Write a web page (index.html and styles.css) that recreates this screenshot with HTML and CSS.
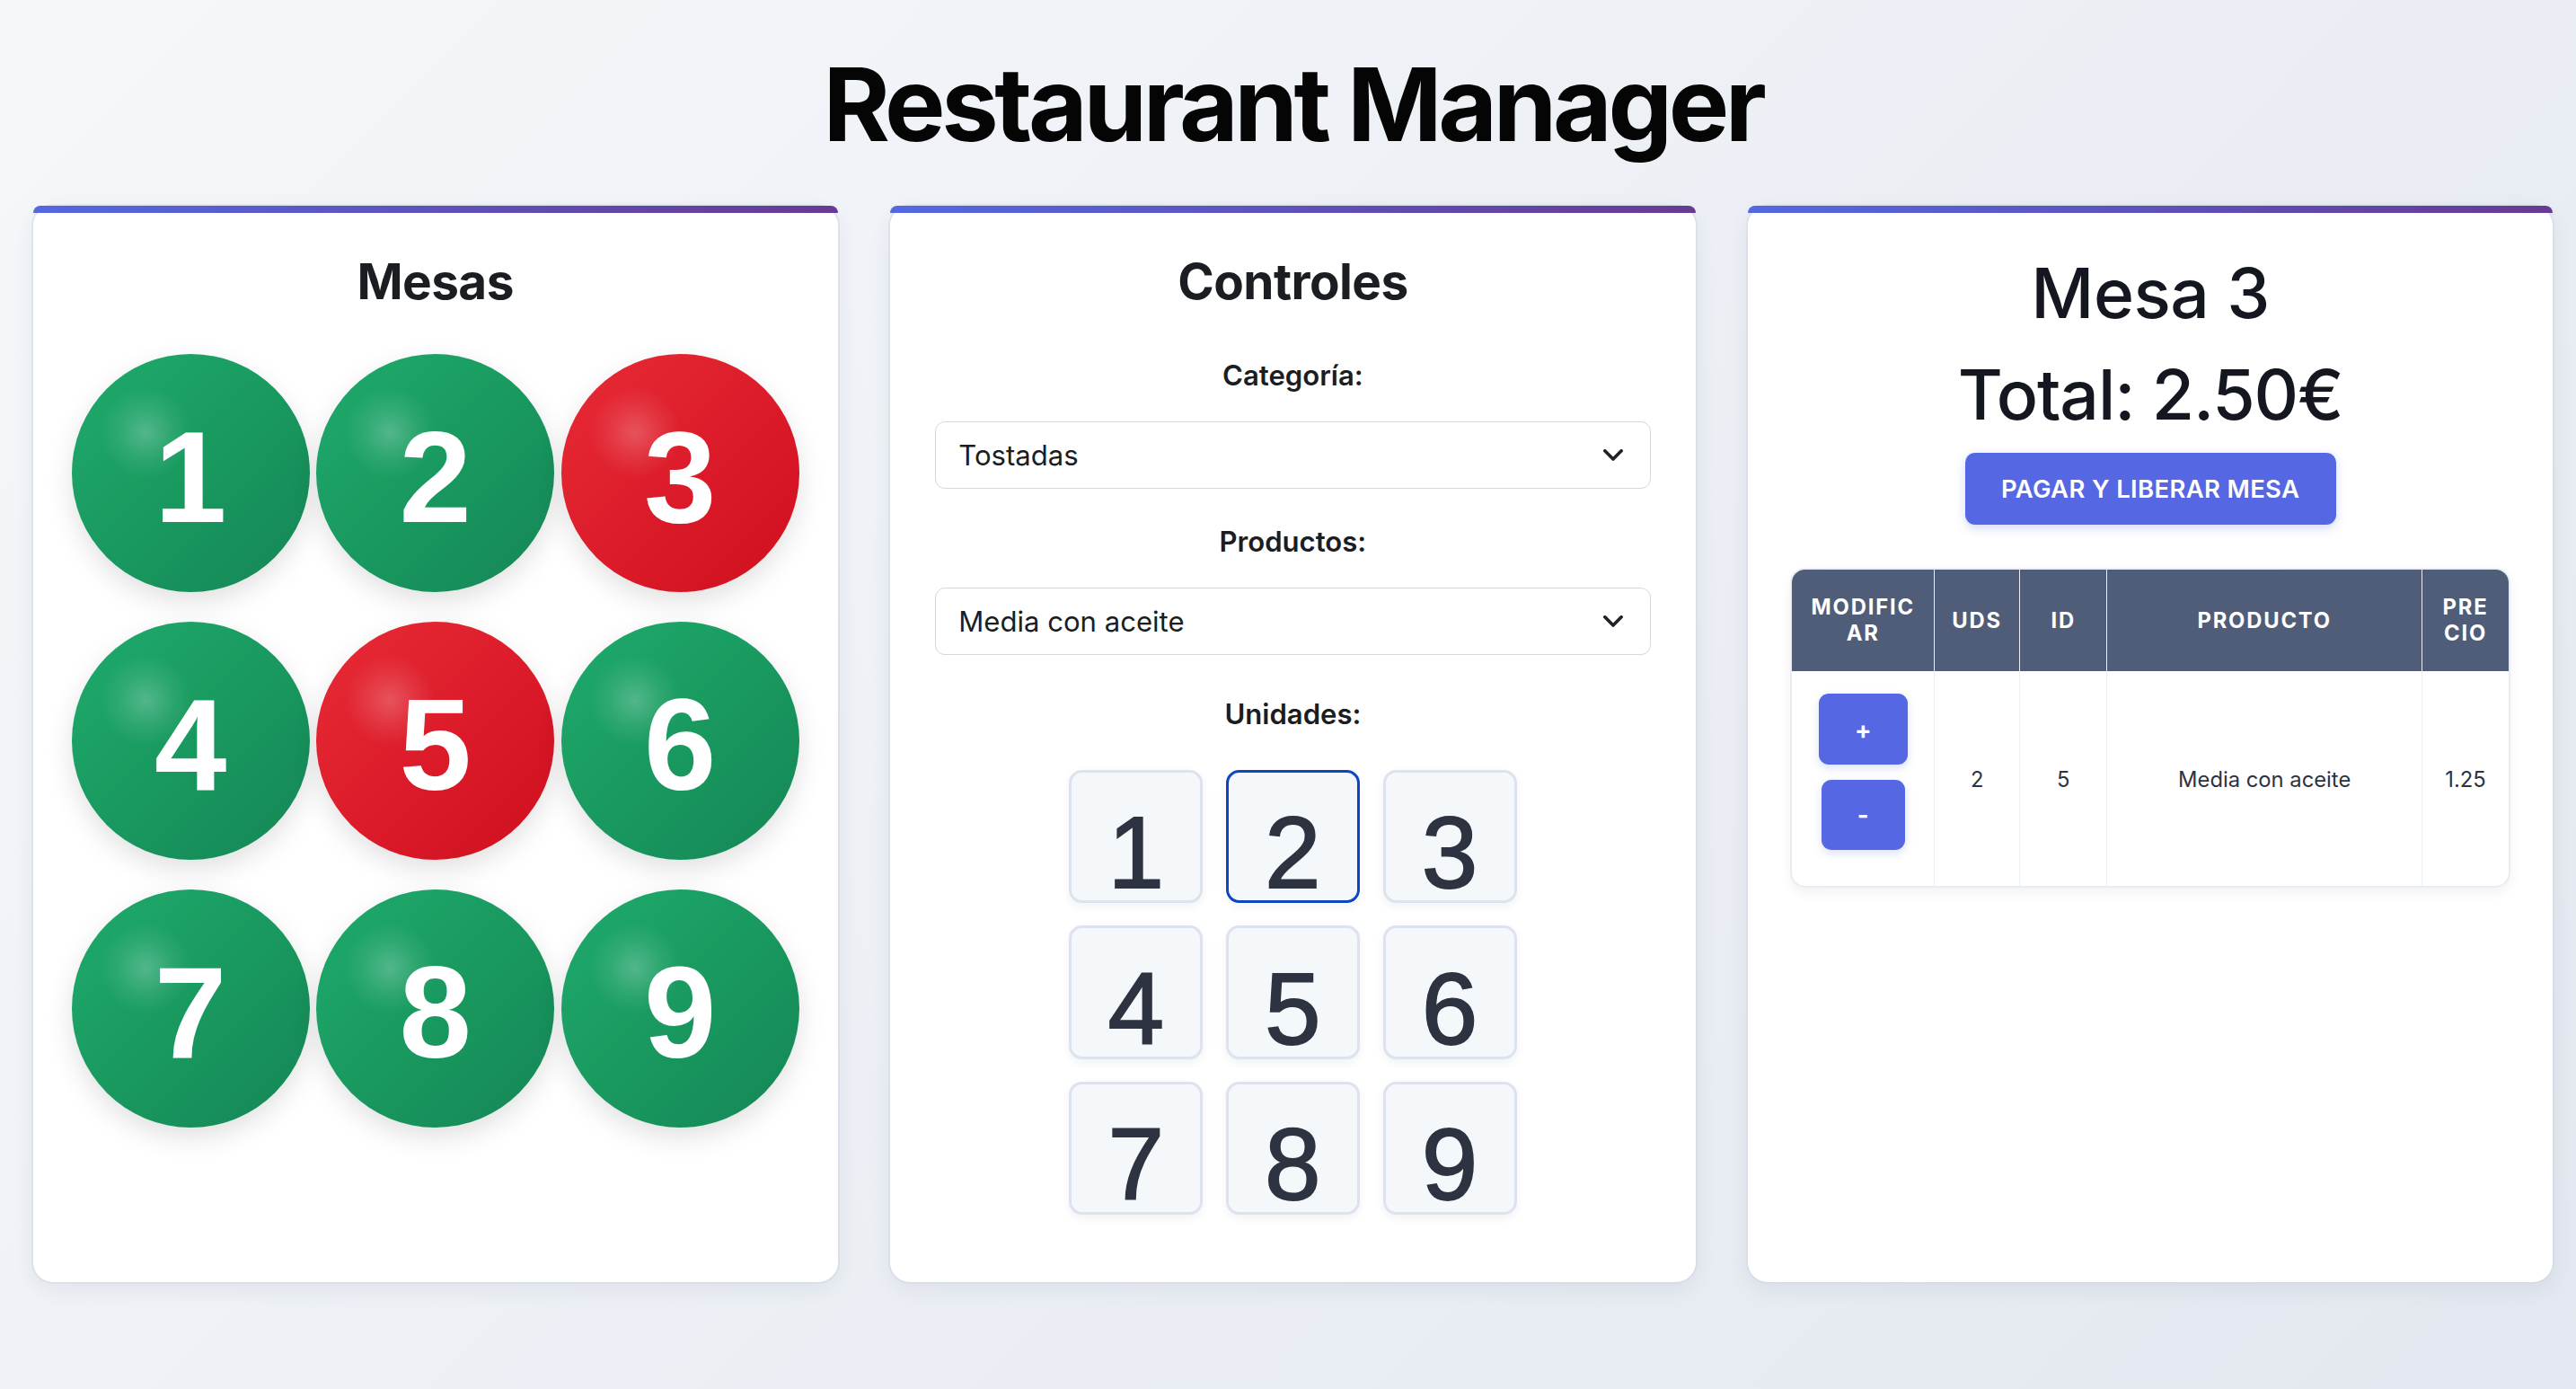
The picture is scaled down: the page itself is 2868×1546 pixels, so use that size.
FILE: index.html
```html
<!DOCTYPE html>
<html lang="es">
<head>
<meta charset="utf-8">
<title>Restaurant Manager</title>
<link rel="stylesheet" href="styles.css">
</head>
<body>
<div class="app">
  <h1 class="title">Restaurant Manager</h1>
  <main class="cards">
    <section class="card">
      <h2 class="card-title">Mesas</h2>
      <div class="tables-grid">
        <button class="table-btn">1</button>
        <button class="table-btn">2</button>
        <button class="table-btn busy">3</button>
        <button class="table-btn">4</button>
        <button class="table-btn busy">5</button>
        <button class="table-btn">6</button>
        <button class="table-btn">7</button>
        <button class="table-btn">8</button>
        <button class="table-btn">9</button>
      </div>
    </section>

    <section class="card">
      <h2 class="card-title">Controles</h2>
      <label class="field-label first">Categoría:</label>
      <div class="select-wrap">
        <select class="select"><option>Tostadas</option></select>
        <svg class="chevron" viewBox="0 0 12 7" width="12" height="7"><path d="M1 1l5 5 5-5" fill="none" stroke="#1f2328" stroke-width="2" stroke-linecap="round" stroke-linejoin="round"/></svg>
      </div>
      <label class="field-label">Productos:</label>
      <div class="select-wrap">
        <select class="select"><option>Media con aceite</option></select>
        <svg class="chevron" viewBox="0 0 12 7" width="12" height="7"><path d="M1 1l5 5 5-5" fill="none" stroke="#1f2328" stroke-width="2" stroke-linecap="round" stroke-linejoin="round"/></svg>
      </div>
      <label class="field-label units">Unidades:</label>
      <div class="keypad">
        <button class="key">1</button>
        <button class="key selected">2</button>
        <button class="key">3</button>
        <button class="key">4</button>
        <button class="key">5</button>
        <button class="key">6</button>
        <button class="key">7</button>
        <button class="key">8</button>
        <button class="key">9</button>
      </div>
    </section>

    <section class="card">
      <h2 class="order-title">Mesa 3</h2>
      <p class="order-total">Total: 2.50€</p>
      <button class="pay-btn">Pagar y liberar mesa</button>
      <div class="table-wrap">
        <table class="order-table">
          <colgroup>
            <col class="c-mod"><col class="c-uds"><col class="c-id"><col class="c-prod"><col class="c-price">
          </colgroup>
          <thead>
            <tr><th>Modificar</th><th>Uds</th><th>ID</th><th>Producto</th><th>Precio</th></tr>
          </thead>
          <tbody>
            <tr>
              <td class="mod-cell">
                <button class="mini-btn">+</button>
                <button class="mini-btn">-</button>
              </td>
              <td>2</td>
              <td>5</td>
              <td>Media con aceite</td>
              <td>1.25</td>
            </tr>
          </tbody>
        </table>
      </div>
    </section>
  </main>
</div>
</body>
</html>
```

FILE: styles.css
```css
html, body {
  margin: 0;
  padding: 0;
}

body {
  min-height: 100vh;
  background: linear-gradient(135deg, #f5f7fa 0%, #e3e8f0 100%);
  font-family: Inter, "Noto Sans", sans-serif;
  color: #1a1d21;
}

.app {
  zoom: 1.829;
  padding: 0 14px 0 20px;
}

.title {
  margin: 0;
  padding: 26px 0 25px;
  text-align: center;
  font-size: 62px;
  line-height: 1.2;
  font-weight: 700;
  letter-spacing: -2.4px;
  color: #050505;
}

.cards {
  display: grid;
  grid-template-columns: repeat(3, 490px);
  column-gap: 32px;
  align-items: stretch;
}

.card {
  position: relative;
  background: #fff;
  border-radius: 12px;
  padding: 28px 27px 41px;
  box-shadow: 0 0 0 1px rgba(203, 212, 226, 0.45), 0 4px 14px rgba(30, 40, 70, 0.07);
}

.card::before {
  content: "";
  position: absolute;
  top: 0;
  left: 0;
  right: 0;
  height: 4px;
  border-radius: 12px 12px 0 0;
  background: linear-gradient(90deg, #5468e0 0%, #673a94 100%);
}

.card-title {
  margin: 0 0 26px;
  text-align: center;
  font-size: 30px;
  line-height: 36px;
  font-weight: 700;
  letter-spacing: -0.3px;
  color: #1a1d21;
}

/* Mesas */
.tables-grid {
  display: grid;
  grid-template-columns: repeat(3, 145px);
  gap: 18px 4px;
  justify-content: center;
  margin: 0 -4px;
}

.table-btn {
  width: 145px;
  height: 145px;
  border: none;
  border-radius: 50%;
  padding: 5px 0 0;
  display: flex;
  align-items: center;
  justify-content: center;
  font-family: "Liberation Sans", Arial, sans-serif;
  font-weight: 700;
  font-size: 79px;
  line-height: 1;
  color: #fff;
  background:
    radial-gradient(circle at 31% 33%, rgba(255, 255, 255, 0.24) 0, rgba(255, 255, 255, 0.08) 12%, rgba(255, 255, 255, 0) 20%),
    linear-gradient(135deg, #1fab6d 0%, #19995f 50%, #158657 100%);
  box-shadow: 0 6px 16px rgba(0, 0, 0, 0.12);
}

.table-btn.busy {
  background:
    radial-gradient(circle at 31% 33%, rgba(255, 255, 255, 0.22) 0, rgba(255, 255, 255, 0.08) 12%, rgba(255, 255, 255, 0) 20%),
    linear-gradient(135deg, #e82b36 0%, #dc1c2a 50%, #cf0f1e 100%);
}

/* Controles */
.field-label {
  display: block;
  text-align: center;
  font-size: 17px;
  line-height: 28px;
  font-weight: 600;
  color: #1a1d21;
  margin-bottom: 14px;
}

.field-label.first {
  margin-top: -1px;
}

.field-label.units {
  margin-top: 22px;
}

.select-wrap {
  position: relative;
  margin-bottom: 18px;
}

.select {
  display: block;
  width: 100%;
  height: 41px;
  box-sizing: border-box;
  padding: 0 40px 0 14px;
  border: 1px solid #d3d7de;
  border-radius: 6px;
  background: #fff;
  font-family: Inter, "Noto Sans", sans-serif;
  font-size: 17px;
  color: #1a1d21;
  appearance: none;
  -webkit-appearance: none;
}

.chevron {
  position: absolute;
  right: 17px;
  top: 17px;
  pointer-events: none;
}

.keypad {
  display: grid;
  grid-template-columns: repeat(3, 81.5px);
  grid-auto-rows: 81px;
  gap: 14px;
  justify-content: center;
  margin-top: 20px;
}

.key {
  box-sizing: border-box;
  border: 2px solid #dde3ec;
  border-radius: 8px;
  background: #f5f8fb;
  padding: 20px 0 0;
  display: flex;
  align-items: center;
  justify-content: center;
  font-family: "Liberation Sans", Arial, sans-serif;
  font-size: 61.5px;
  line-height: 1;
  color: #2d3340;
  -webkit-text-stroke: 1px #2d3340;
  box-shadow: 0 2px 5px rgba(20, 30, 60, 0.06);
}

.key.selected {
  border-color: #0c46c2;
  box-shadow: 0 0 0 1px #fff, 0 2px 5px rgba(20, 30, 60, 0.06);
}

/* Mesa detail */
.order-title {
  margin: 0;
  text-align: center;
  font-size: 42px;
  line-height: 50px;
  font-weight: 500;
  letter-spacing: -0.3px;
  color: #14171f;
}

.order-total {
  margin: 12px 0 0;
  text-align: center;
  font-size: 42px;
  line-height: 50px;
  font-weight: 500;
  letter-spacing: -0.6px;
  color: #14171f;
}

.pay-btn {
  display: block;
  margin: 10px auto 0;
  height: 44px;
  padding: 0 22px;
  border: none;
  border-radius: 6px;
  background: #5567e3;
  color: #fff;
  font-family: Inter, "Noto Sans", sans-serif;
  font-size: 15px;
  font-weight: 600;
  letter-spacing: 0.2px;
  text-transform: uppercase;
  box-shadow: 0 2px 6px rgba(85, 103, 227, 0.25);
}

.table-wrap {
  margin-top: 27px;
  border-radius: 8px;
  overflow: hidden;
  background: #fff;
  box-shadow: 0 0 0 1px rgba(225, 231, 240, 0.7), 0 3px 8px rgba(20, 30, 60, 0.07);
}

.order-table {
  width: 100%;
  border-collapse: collapse;
  table-layout: fixed;
}

.c-mod { width: 86.5px; }
.c-uds { width: 52px; }
.c-id { width: 53px; }
.c-prod { width: 192px; }
.c-price { width: 52.5px; }

.order-table th {
  background: #4f5d78;
  color: #fff;
  font-size: 13px;
  line-height: 16px;
  font-weight: 700;
  letter-spacing: 1px;
  text-transform: uppercase;
  text-align: center;
  padding: 15px 10px;
  border-right: 1px solid #e9edf3;
  word-break: break-all;
}

.order-table th:last-child,
.order-table td:last-child {
  border-right: none;
}

.order-table td {
  padding: 14px 10px 13px;
  border-right: 1px solid #edf1f6;
  text-align: center;
  vertical-align: middle;
  font-size: 13px;
  color: #2d3340;
}

.mini-btn {
  display: block;
  margin: 0 auto 9px;
  height: 43px;
  padding: 0 22px;
  border: none;
  border-radius: 6px;
  background: #5567e3;
  color: #fff;
  font-family: Inter, "Noto Sans", sans-serif;
  font-size: 15px;
  font-weight: 700;
  box-shadow: 0 2px 5px rgba(85, 103, 227, 0.2);
}
```
